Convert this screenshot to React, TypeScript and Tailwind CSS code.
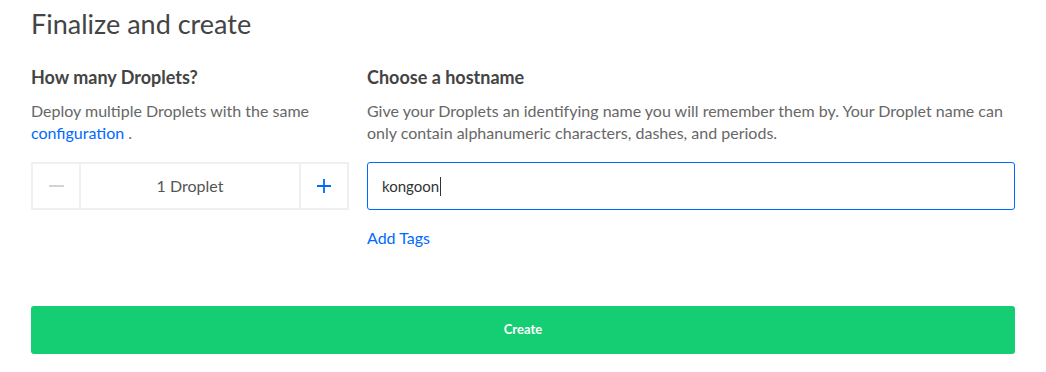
export default function App() {
  return (
    <div className="min-h-screen bg-white px-[31px] pt-[8px] text-[#444]" style={{ fontFamily: '"Lato", "Open Sans", sans-serif' }}>
      <h1 className="text-[27px] leading-[32px] font-normal text-[#444]">Finalize and create</h1>

      <div className="mt-[25px] flex gap-[18px]">
        {/* Droplet count */}
        <div className="w-[318px] shrink-0">
          <h2 className="text-[18px] leading-[24px] font-bold text-[#444]">How many Droplets?</h2>
          <p className="mt-[11px] text-[16px] leading-[22px] text-[#676767]">
            Deploy multiple Droplets with the same{" "}
            <a className="text-[#0069ff]">configuration</a> .
          </p>
          <div className="mt-[18px] flex h-[48px] border-2 border-[#f0f0f0]">
            <button className="flex w-[48px] items-center justify-center border-r-2 border-[#f0f0f0]">
              <span className="block h-[1.5px] w-[15px] bg-[#d3d3d3]" />
            </button>
            <div className="flex flex-1 items-center justify-center text-[16px] text-[#555]">1 Droplet</div>
            <button className="flex w-[48px] items-center justify-center border-l-2 border-[#f0f0f0]">
              <svg width="16" height="16" viewBox="0 0 16 16" className="stroke-[#0069ff]" strokeWidth="1.8">
                <path d="M8 1v14M1 8h14" />
              </svg>
            </button>
          </div>
        </div>

        {/* Hostname */}
        <div className="flex-1">
          <h2 className="text-[18px] leading-[24px] font-bold text-[#444]">Choose a hostname</h2>
          <p className="mt-[11px] text-[16px] leading-[22px] text-[#676767]">
            Give your Droplets an identifying name you will remember them by. Your Droplet name can only contain alphanumeric characters, dashes, and periods.
          </p>
          <div className="mt-[18px] flex h-[48px] items-center rounded-[3px] border border-[#0069ff] px-[14px] text-[15px] text-[#333]">
            kongoon<span className="ml-px inline-block h-[19px] w-px bg-[#333]" />
          </div>
          <a className="mt-[17px] block text-[16px] leading-[22px] text-[#0069ff]">Add Tags</a>
        </div>
      </div>

      <button className="mt-[57px] flex h-[48px] w-full items-center justify-center rounded-[3px] bg-[#15cd72] text-[13px] font-bold text-white">
        Create
      </button>
    </div>
  )
}
